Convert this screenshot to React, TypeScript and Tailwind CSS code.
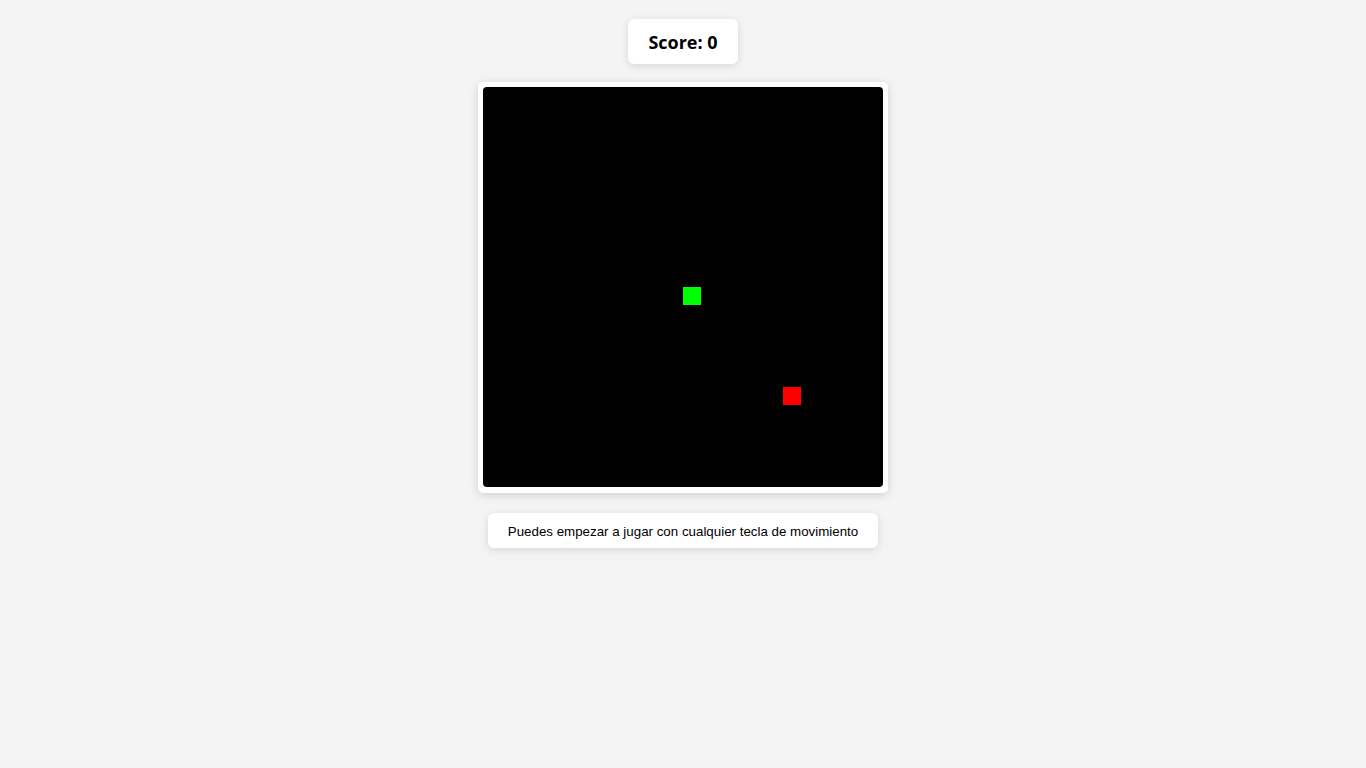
import React from "react";

const CELL = 20;

export default function App() {
  const snake = [{ x: 10, y: 10 }];
  const food = { x: 15, y: 15 };

  return (
    <div className="min-h-screen w-full bg-[#f4f4f4] flex flex-col items-center pt-[19px]">
      <div className="bg-white rounded-md shadow-[0_2px_8px_rgba(0,0,0,0.12)] px-5 h-[45px] pt-[2px] flex items-center">
        <span className="text-[18px] font-bold text-black font-['Open_Sans',sans-serif]">
          Score: 0
        </span>
      </div>

      <div className="mt-[18px] bg-white rounded-[5px] p-[5px] pb-[6px] shadow-[0_2px_10px_rgba(0,0,0,0.15)]">
        <div className="relative w-[400px] h-[400px] bg-black rounded-[4px] overflow-hidden">
          {snake.map((s, i) => (
            <div
              key={i}
              className="absolute w-[18px] h-[18px] bg-[#00ff00]"
              style={{ left: s.x * CELL, top: s.y * CELL }}
            />
          ))}
          <div
            className="absolute w-[18px] h-[18px] bg-[#ff0000]"
            style={{ left: food.x * CELL, top: food.y * CELL }}
          />
        </div>
      </div>

      <div className="mt-5 w-[390px] h-[35px] pt-[2px] bg-white rounded-md shadow-[0_2px_8px_rgba(0,0,0,0.12)] flex items-center justify-center">
        <span className="text-[13.33px] text-black font-['Liberation_Sans',Arial,sans-serif]">
          Puedes empezar a jugar con cualquier tecla de movimiento
        </span>
      </div>
    </div>
  );
}
